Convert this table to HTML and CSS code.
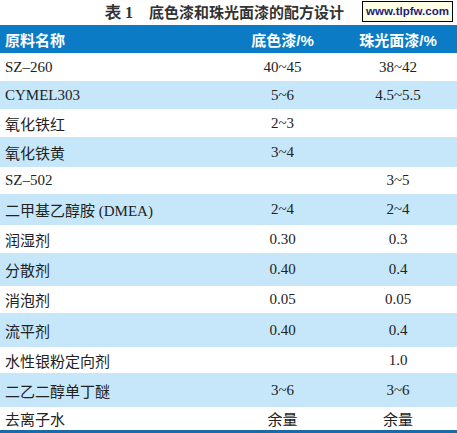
FILE: index.html
```html
<!DOCTYPE html>
<html lang="zh-CN">
<head>
    <meta charset="UTF-8">
    <meta name="viewport" content="width=device-width, initial-scale=1.0">
    <title>表1 底色漆和珠光面漆的配方设计</title>
    <link rel="stylesheet" href="styles.css">
</head>
<body>
    <div class="caption">
        <h1 class="title"><b>表 1</b>底色漆和珠光面漆的配方设计</h1>
        <span class="stamp">www.tlpfw.com</span>
    </div>
    <div class="recipe">
        <div class="row head">
            <div class="name">原料名称</div>
            <div class="val">底色漆/%</div>
            <div class="val">珠光面漆/%</div>
        </div>
        <div class="row">
            <div class="name">SZ–260</div>
            <div class="val">40~45</div>
            <div class="val">38~42</div>
        </div>
        <div class="row">
            <div class="name">CYMEL303</div>
            <div class="val">5~6</div>
            <div class="val">4.5~5.5</div>
        </div>
        <div class="row">
            <div class="name">氧化铁红</div>
            <div class="val">2~3</div>
            <div class="val"></div>
        </div>
        <div class="row">
            <div class="name">氧化铁黄</div>
            <div class="val">3~4</div>
            <div class="val"></div>
        </div>
        <div class="row">
            <div class="name">SZ–502</div>
            <div class="val"></div>
            <div class="val">3~5</div>
        </div>
        <div class="row">
            <div class="name">二甲基乙醇胺 (DMEA)</div>
            <div class="val">2~4</div>
            <div class="val">2~4</div>
        </div>
        <div class="row">
            <div class="name">润湿剂</div>
            <div class="val">0.30</div>
            <div class="val">0.3</div>
        </div>
        <div class="row">
            <div class="name">分散剂</div>
            <div class="val">0.40</div>
            <div class="val">0.4</div>
        </div>
        <div class="row">
            <div class="name">消泡剂</div>
            <div class="val">0.05</div>
            <div class="val">0.05</div>
        </div>
        <div class="row">
            <div class="name">流平剂</div>
            <div class="val">0.40</div>
            <div class="val">0.4</div>
        </div>
        <div class="row">
            <div class="name">水性银粉定向剂</div>
            <div class="val"></div>
            <div class="val">1.0</div>
        </div>
        <div class="row">
            <div class="name">二乙二醇单丁醚</div>
            <div class="val">3~6</div>
            <div class="val">3~6</div>
        </div>
        <div class="row">
            <div class="name">去离子水</div>
            <div class="val">余量</div>
            <div class="val">余量</div>
        </div>
    </div>
</body>
</html>
```

FILE: styles.css
```css
body {
    margin: 0;
    background: #fff;
    font-family: "Liberation Serif", "Noto Sans CJK SC", serif;
    color: #222;
}

.caption {
    position: relative;
    height: 25px;
}

.title {
    margin: 0;
    padding-left: 105px;
    line-height: 24px;
    font-size: 15px;
    font-weight: bold;
    font-family: "Noto Sans CJK SC", sans-serif;
    color: #333;
}

.title b {
    font-family: "Liberation Serif", serif;
    font-size: 16px;
    margin-right: 16px;
}

/* watermark box */
.stamp {
    position: absolute;
    left: 362px;
    top: 1px;
    width: 89px;
    height: 19px;
    border: 1px solid #000;
    background: #ffffe6;
    color: #1b1b84;
    font: bold 11.5px "Liberation Sans", Arial, sans-serif;
    line-height: 19px;
    text-align: center;
}

.recipe {
    border-bottom: 3px solid #1a6aa8;
}

.row {
    display: grid;
    grid-template-columns: 226px 113px 118px;
    align-items: center;
    height: 28px;
    font-size: 15px;
}

.row:nth-child(odd) {
    background: #c6e7f9;
}

.row.head {
    background: #0a7bc4;
    color: #fff;
    font-family: "Liberation Sans", "Noto Sans CJK SC", sans-serif;
    font-weight: bold;
}

.row:nth-child(5) { height: 30px; }
.row:nth-child(6) { height: 27px; }
.row:nth-child(7) { height: 31px; }
.row:nth-child(9) { height: 33px; }
.row:nth-child(10) { height: 27px; }
.row:nth-child(11) { height: 34px; }
.row:nth-child(12) { height: 26px; }
.row:nth-child(13) { height: 34px; }
.row:nth-child(14) { height: 23px; }

.name {
    padding-left: 5px;
    white-space: nowrap;
}

.val {
    text-align: center;
}
```
